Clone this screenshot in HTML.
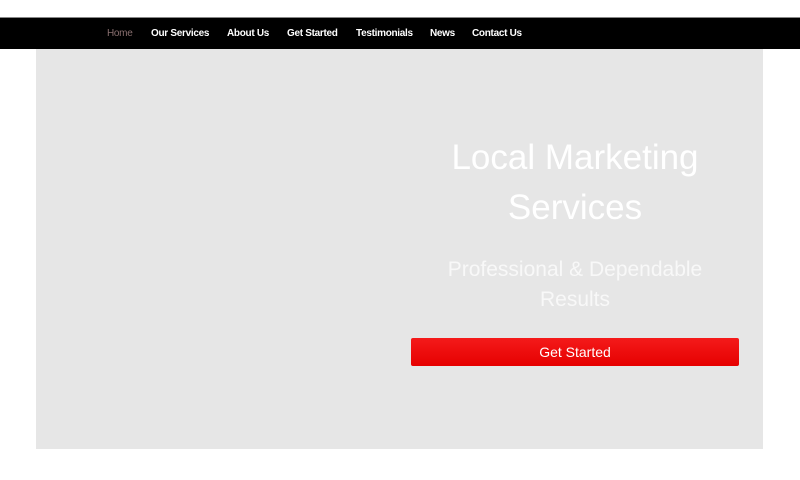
<!DOCTYPE html>
<html><head><meta charset="utf-8"><style>
*{margin:0;padding:0;box-sizing:border-box}
body{width:800px;height:480px;background:#fff;position:relative;overflow:hidden;font-family:"Liberation Sans",sans-serif}
.nav{position:absolute;left:0;top:17px;width:800px;height:32px;background:#000;border-top:1px solid #888}
.nav span{position:absolute;top:10px;font-size:10px;font-weight:bold;color:#fff;white-space:nowrap;letter-spacing:-0.3px}
.hero{position:absolute;left:36px;top:49px;width:727px;height:400px;background:#e6e6e6}
.t{position:absolute;left:411px;width:328px;text-align:center;color:#fff}
.h1{top:133px;font-size:35px;line-height:50px}
.h2{top:255px;font-size:21px;line-height:30px;color:#f8f8f8}
.btn{position:absolute;left:411px;top:338px;width:328px;height:28px;background:linear-gradient(#f41a1a,#e60000);border-radius:2px;color:#fff;font-size:14px;text-align:center;line-height:28px}
</style></head><body>
<div class="nav">
<span style="left:107px;color:#8a7070;font-weight:normal">Home</span>
<span style="left:151px">Our Services</span>
<span style="left:227px">About Us</span>
<span style="left:287px">Get Started</span>
<span style="left:356px">Testimonials</span>
<span style="left:430px">News</span>
<span style="left:472px">Contact Us</span>
</div>
<div class="hero"></div>
<div class="t h1">Local Marketing<br>Services</div>
<div class="t h2">Professional &amp; Dependable<br>Results</div>
<div class="btn">Get Started</div>
</body></html>
